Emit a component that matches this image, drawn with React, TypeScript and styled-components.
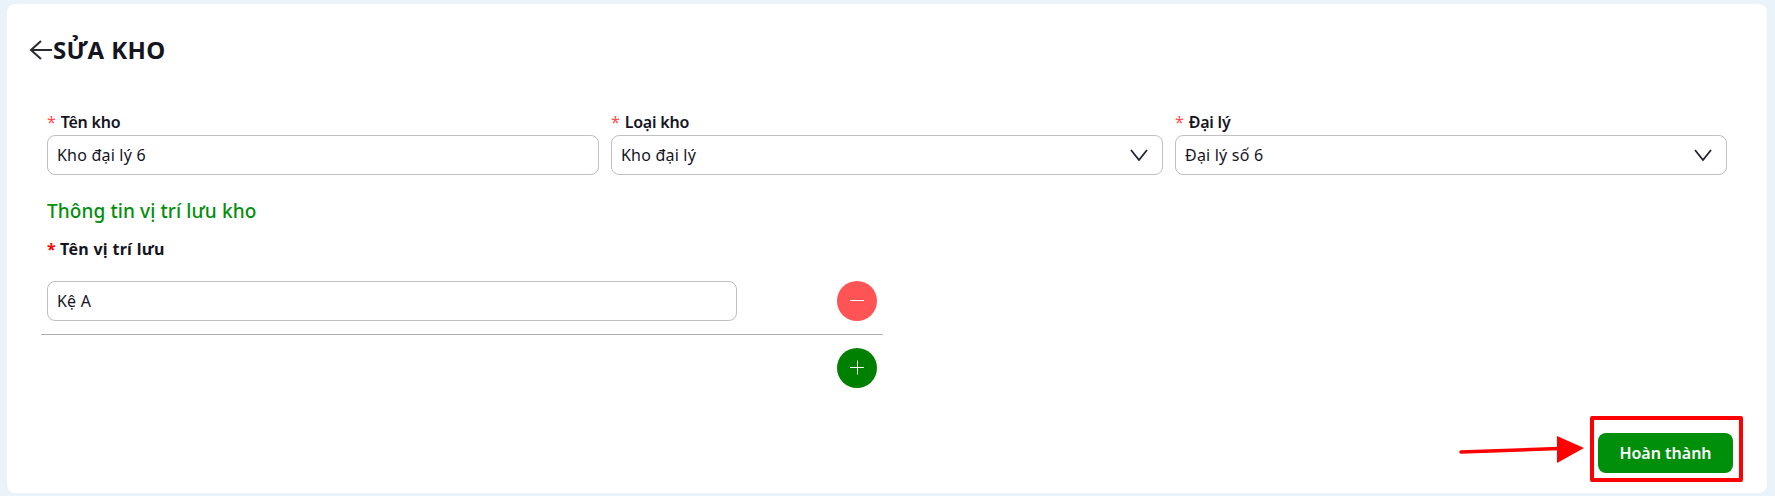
import styled, { createGlobalStyle } from "styled-components";
import { FC } from "react";

const GlobalStyle = createGlobalStyle`
  html, body {
    margin: 0;
    padding: 0;
    background: #e9f3f9;
    font-family: "Noto Sans", "Liberation Sans", sans-serif;
    color: #15151f;
  }
  * {
    box-sizing: border-box;
  }
`;

const Page = styled.div`
  position: relative;
  width: 1775px;
  height: 496px;
  padding: 4px 8px 3px 7px;
  overflow: hidden;
`;

const Card = styled.main`
  height: 489px;
  background: #fff;
  border-radius: 8px;
  padding: 0 40px 20px;
  display: flex;
  flex-direction: column;
`;

const Header = styled.header`
  display: flex;
  align-items: center;
  gap: 1px;
  height: 32px;
  margin: 30px 0 0 -18px;
`;

const Title = styled.h1`
  margin: 0;
  font-size: 24px;
  line-height: 32px;
  font-weight: 700;
  letter-spacing: 0.4px;
`;

const TopFields = styled.div`
  display: grid;
  grid-template-columns: repeat(3, 552px);
  column-gap: 12px;
  margin-top: 45px;
`;

const Label = styled.label`
  display: block;
  height: 22px;
  margin-bottom: 2px;
  font-size: 16px;
  line-height: 22px;
  font-weight: 600;
  letter-spacing: -0.2px;

  &::before {
    content: "*";
    color: #ff4d4f;
    font-weight: 400;
    margin-right: 5px;
  }
`;

const Box = styled.div<{ $width?: number }>`
  display: flex;
  align-items: center;
  justify-content: space-between;
  width: ${(p) => (p.$width ? `${p.$width}px` : "100%")};
  height: 40px;
  padding: 0 14px 0 9px;
  border: 1px solid #bfbfc4;
  border-radius: 8px;
  font-size: 16px;
  letter-spacing: 0.2px;
  background: #fff;
`;

const SectionTitle = styled.h2`
  margin: 24px 0 0;
  font-size: 19px;
  line-height: 24px;
  font-weight: 500;
  letter-spacing: 0.1px;
  color: #008f0a;
`;

const SubLabel = styled.div`
  margin-top: 15px;
  height: 22px;
  font-size: 16px;
  line-height: 22px;
  font-weight: 700;
  letter-spacing: 0.3px;

  span {
    color: #f00;
    margin-right: 4px;
  }
`;

const LocationRow = styled.div`
  display: flex;
  align-items: center;
  justify-content: space-between;
  width: 830px;
  margin-top: 21px;
`;

const Divider = styled.hr`
  width: 842px;
  margin: 13px 0 13px -6px;
  border: 0;
  border-top: 1px solid #aeaeae;
`;

const RoundButton = styled.button<{ $color: string }>`
  display: flex;
  align-items: center;
  justify-content: center;
  width: 40px;
  height: 40px;
  padding: 0;
  border: 0;
  border-radius: 50%;
  background: ${(p) => p.$color};
`;

const AddRow = styled.div`
  display: flex;
  justify-content: flex-end;
  width: 830px;
`;

const Footer = styled.footer`
  display: flex;
  justify-content: flex-end;
  margin-top: auto;
`;

const SubmitButton = styled.button`
  width: 135px;
  height: 40px;
  margin-right: -6px;
  border: 0;
  border-radius: 8px;
  background: #008f0a;
  color: #fff;
  font-family: inherit;
  font-size: 16px;
  font-weight: 600;
`;

const Highlight = styled.div`
  position: absolute;
  left: 1590px;
  top: 416px;
  width: 153px;
  height: 66px;
  border: 4px solid #f00;
  border-radius: 2px;
`;

const Pointer = styled.svg`
  position: absolute;
  left: 1455px;
  top: 430px;
`;

const Chevron: FC = () => (
  <svg width="18" height="12" viewBox="0 0 18 12" fill="none">
    <path d="M1 1l8 10 8-10" stroke="#1f2430" strokeWidth="1.8" />
  </svg>
);

const Sign: FC<{ plus?: boolean }> = ({ plus }) => (
  <svg width="16" height="16" viewBox="0 0 16 16" stroke="#fff" strokeWidth="1">
    <path d="M1 7.500h14" />
    {plus && <path d="M8.500 0.500v14" />}
  </svg>
);

const topFields = [
  { label: "Tên kho", value: "Kho đại lý 6", select: false },
  { label: "Loại kho", value: "Kho đại lý", select: true },
  { label: "Đại lý", value: "Đại lý số 6", select: true },
];

export default function App() {
  return (
    <Page>
      <GlobalStyle />
      <Card>
        <Header>
          <svg width="23" height="24" viewBox="0 0 23 24" fill="none" stroke="#2a2a35" strokeWidth="2">
            <path d="M23 12H2M12 3l-10 9 10 9" />
          </svg>
          <Title>SỬA KHO</Title>
        </Header>
        <TopFields>
          {topFields.map((f) => (
            <div key={f.label}>
              <Label>{f.label}</Label>
              <Box>
                {f.value}
                {f.select && <Chevron />}
              </Box>
            </div>
          ))}
        </TopFields>
        <SectionTitle>Thông tin vị trí lưu kho</SectionTitle>
        <SubLabel>
          <span>*</span>Tên vị trí lưu
        </SubLabel>
        <LocationRow>
          <Box $width={690}>Kệ A</Box>
          <RoundButton $color="#ff5456">
            <Sign />
          </RoundButton>
        </LocationRow>
        <Divider />
        <AddRow>
          <RoundButton $color="#008000">
            <Sign plus />
          </RoundButton>
        </AddRow>
        <Footer>
          <SubmitButton>Hoàn thành</SubmitButton>
        </Footer>
      </Card>
      <Highlight />
      <Pointer width="132" height="36" viewBox="0 0 132 36" fill="#f00">
        <path d="M6 22L104 18.500" stroke="#f00" strokeWidth="3.500" strokeLinecap="round" />
        <path d="M102 6L129 18 102 33Z" />
      </Pointer>
    </Page>
  );
}
